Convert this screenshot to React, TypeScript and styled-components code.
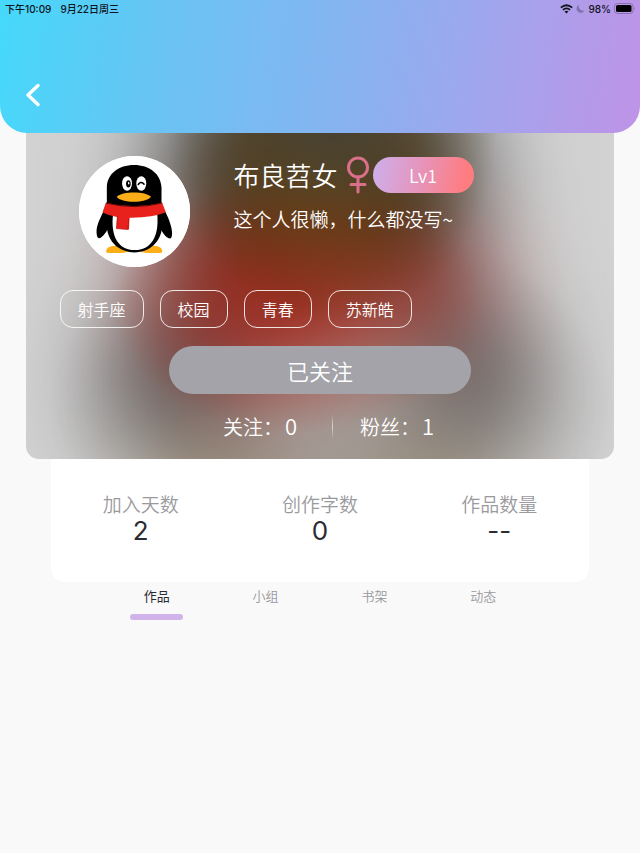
import React from "react";
import styled, { createGlobalStyle } from "styled-components";

const GlobalStyle = createGlobalStyle`
  *, *::before, *::after { box-sizing: border-box; }
  body {
    margin: 0;
    background: #f9f9f9;
    font-family: "Noto Sans CJK SC", sans-serif;
    color: #2b2b33;
  }
  button { font: inherit; color: inherit; border: 0; padding: 0; background: none; cursor: pointer; }
`;

const Page = styled.div`
  display: flex;
  flex-direction: column;
`;

const Header = styled.header`
  display: flex;
  flex-direction: column;
  height: 133px;
  border-radius: 0 0 27px 27px;
  background: linear-gradient(99deg, #45d9fb 0%, #68c4f3 25%, #86b3f0 54%, #a3a4ec 77%, #bf93e7 100%);
`;

const StatusBar = styled.div`
  display: flex;
  justify-content: space-between;
  align-items: center;
  height: 17px;
  padding: 0 4px 0 5px;
  font: 500 10px/16px Inter, "Noto Sans CJK SC", sans-serif;
  color: #10141c;
`;

const StatusGroup = styled.div<{ $gap: number }>`
  display: flex;
  align-items: center;
  gap: ${(p) => p.$gap}px;
`;

const BackButton = styled.button`
  display: flex;
  align-items: center;
  justify-content: center;
  width: 32px;
  height: 32px;
  margin: 62px 0 0 17px;
`;

const ProfileCard = styled.section`
  position: relative;
  overflow: hidden;
  display: flex;
  flex-direction: column;
  margin: 0 4%;
  padding: 23px 34px 19px 34px;
  border-radius: 0 0 13px 13px;
  background: #fff;
  color: #fff;
`;

const Backdrop = styled.div`
  position: absolute;
  left: 0;
  top: 50%;
  width: 100%;
  aspect-ratio: 1;
  transform: translateY(-50%);
  filter: blur(54px) saturate(1.1);

  svg { display: block; width: 100%; height: 100%; overflow: visible; }
`;

const Shade = styled.div`
  position: absolute;
  inset: 0;
  background:
    radial-gradient(28% 58% at 52% 0%, rgba(66, 58, 36, 0.6), rgba(80, 58, 20, 0.5) 50%, transparent),
    radial-gradient(32% 40% at 46% 52%, rgba(160, 20, 5, 0.5), rgba(160, 20, 5, 0.25) 50%, transparent),
    radial-gradient(48% 60% at 52% 85%, rgba(100, 85, 78, 0.35), rgba(100, 85, 78, 0.25) 55%, transparent),
    rgba(50, 50, 50, 0.22);
`;

const CardBody = styled.div`
  position: relative;
  display: flex;
  flex-direction: column;
`;

const Identity = styled.div`
  display: flex;
  gap: 44px;
  padding-left: 19px;
`;

const Avatar = styled.div`
  flex: none;
  width: 111px;
  height: 111px;
  border-radius: 50%;
  overflow: hidden;
  background: #fff;

  svg { display: block; width: 100%; height: 100%; }
`;

const Intro = styled.div`
  display: flex;
  flex-direction: column;
  gap: 12px;
`;

const NameRow = styled.div`
  display: flex;
  align-items: center;
  height: 38px;
`;

const Name = styled.h1`
  margin: 0 8px 0 0;
  font: 350 26px/36px "Noto Sans CJK SC", sans-serif;
`;

const Level = styled.span`
  width: 101px;
  margin-left: 3px;
  border-radius: 18px;
  background: linear-gradient(100deg, #cdb0ec 0%, #e595bd 45%, #ff7c80 90%);
  font-size: 18px;
  font-weight: 350;
  line-height: 36px;
  text-align: center;
`;

const Bio = styled.p`
  margin: 0;
  font: 350 19px/26px "Noto Sans CJK SC", sans-serif;
`;

const Tags = styled.ul`
  display: flex;
  flex-wrap: wrap;
  gap: 16px;
  margin: 23px 0 0;
  padding: 0;
  list-style: none;
`;

const Tag = styled.li`
  padding: 0 17px;
  border: 1px solid rgba(255, 255, 255, 0.85);
  border-radius: 13px;
  font: 350 16px/36px "Noto Sans CJK SC", sans-serif;
`;

const FollowButton = styled.button`
  align-self: center;
  width: 58%;
  height: 48px;
  margin-top: 18px;
  border-radius: 24px;
  && { background: #a3a3a9; }
  font: 350 22px/46px "Noto Sans CJK SC", sans-serif;
`;

const Counts = styled.div`
  display: flex;
  align-items: center;
  align-self: center;
  gap: 27px;
  margin-top: 18px;
  padding-left: 25px;
`;

const Count = styled.span`
  display: flex;
  align-items: baseline;
  gap: 2px;
  min-width: 82px;
  font: 350 20px/26px "Noto Sans CJK SC", sans-serif;
`;

const CountNumber = styled.span`
  font-size: 22px;
`;

const Divider = styled.i`
  width: 1px;
  height: 25px;
  background: linear-gradient(transparent, rgba(255, 255, 255, 0.6), transparent);
`;

const Stats = styled.dl`
  display: grid;
  grid-template-columns: repeat(3, 1fr);
  margin: 0 8%;
  padding: 32px 0 37px;
  border-radius: 0 0 14px 14px;
  background: #fff;
  text-align: center;
`;

const StatLabel = styled.dt`
  font: 350 19px/26px "Noto Sans CJK SC", sans-serif;
  color: #9a9a9e;
`;

const StatValue = styled.dd`
  margin: 0;
  font: 400 26px/28px Inter, sans-serif;
  color: #2b2b33;
`;

const Tabs = styled.nav`
  display: grid;
  grid-template-columns: repeat(4, 1fr);
  margin: 2px 16% 0;
`;

const Tab = styled.button<{ $active?: boolean }>`
  display: flex;
  flex-direction: column;
  align-items: center;
  gap: 6px;
  && { color: ${(p) => (p.$active ? "#2b2b33" : "#98989c")}; }
  font: ${(p) => (p.$active ? 400 : 350)} 13px/24px "Noto Sans CJK SC", sans-serif;

  &::after {
    content: "";
    width: 53px;
    height: 6px;
    border-radius: 3px;
    background: ${(p) => (p.$active ? "#d0b3ea" : "transparent")};
  }
`;

const Penguin = () => (
  <svg viewBox="25 18 335 335" aria-hidden="true">
    <rect x="25" y="18" width="335" height="335" fill="#fff" />
    <path d="M107 306Q105 291 136 289L180 302Q170 311 150 311H113Q107 311 107 306Z" fill="#fbae17" />
    <path d="M276 306Q278 291 250 289L204 302Q214 311 234 311H270Q276 311 276 306Z" fill="#fbae17" />
    <path d="M98 187C88 208 77 228 78 250Q79 267 86 266C97 264 109 246 118 226L130 187Z" fill="#000" />
    <path d="M286 187C296 208 306 232 306 252Q305 268 299 267C286 265 275 246 265 226L254 187Z" fill="#000" />
    <path d="M109 170V112C110 72 144 45 191 45S272 72 274 112V170C277 195 277 217 276 231C273 277 238 309 193 309S112 279 109 231C108 214 107 190 109 170Z" fill="#000" />
    <path d="M128 192H261C268 262 241 302 193 302S119 262 128 192Z" fill="#fff" />
    <path d="M106 159Q190 180 276 159L287 188Q245 205 177 204L176 240L138 237L140 202Q113 198 96 188Z" fill="#e8211d" />
    <path d="M141 199L138 237L172 240L176 205" fill="none" stroke="#a8100e" strokeWidth="2" />
    <path d="M106 160Q190 181 276 160" fill="none" stroke="#5d0906" strokeWidth="3" />
    <ellipse cx="170" cy="101" rx="15" ry="22" fill="#fff" />
    <ellipse cx="213" cy="101" rx="15" ry="22" fill="#fff" />
    <ellipse cx="174" cy="102" rx="7" ry="11" fill="#000" />
    <ellipse cx="175" cy="100" rx="2" ry="4" fill="#fff" />
    <path d="M204 104Q207 97 213 98Q219 99 221 103" fill="none" stroke="#000" strokeWidth="5" strokeLinecap="round" />
    <path d="M139 141C154 124 227 124 242 141C230 161 151 161 139 141Z" fill="#fbae17" />
  </svg>
);

const tags = ["射手座", "校园", "青春", "苏新皓"];
const stats = [
  ["加入天数", "2"],
  ["创作字数", "0"],
  ["作品数量", "--"],
];
const tabs = ["作品", "小组", "书架", "动态"];

export default function App() {
  return (
    <Page>
      <GlobalStyle />
      <Header>
        <StatusBar>
          <StatusGroup $gap={9}>
            <span>下午10:09</span>
            <span>9月22日周三</span>
          </StatusGroup>
          <StatusGroup $gap={3}>
            <svg width="13" height="10" viewBox="0 0 13 10" fill="none" stroke="#10141c" strokeWidth="1.7">
              <path d="M.8 3.7Q6.500-1.200 12.200 3.700M2.900 5.900Q6.500 2.900 10.100 5.900" />
              <path d="M4.500 7.500Q6.500 6 8.500 7.500L6.500 9.600Z" fill="#10141c" stroke="none" />
            </svg>
            <svg width="9" height="10" viewBox="0 0 9 10">
              <path d="M3 .8A4.200 4.200 0 1 0 8.500 6.500A4.400 4.400 0 0 1 3 .8Z" fill="#8371af" />
            </svg>
            <span>98%</span>
            <svg width="22" height="11" viewBox="0 0 22 11">
              <rect x=".5" y=".5" width="18.500" height="10" rx="2.800" fill="none" stroke="#8b70b0" />
              <rect x="2" y="2" width="15.500" height="7" rx="1.500" fill="#000" />
              <path d="M20 3.700Q21.500 5.500 20 7.300Z" fill="#8b70b0" />
            </svg>
          </StatusGroup>
        </StatusBar>
        <BackButton aria-label="返回">
          <svg width="16" height="24" viewBox="0 0 16 24" fill="none" stroke="#fff" strokeWidth="3.400" strokeLinecap="round" strokeLinejoin="round">
            <path d="M13 2.500L3 12L13 21.500" />
          </svg>
        </BackButton>
      </Header>

      <ProfileCard>
        <Backdrop>
          <Penguin />
        </Backdrop>
        <Shade />
        <CardBody>
          <Identity>
            <Avatar>
              <Penguin />
            </Avatar>
            <Intro>
              <NameRow>
                <Name>布良苕女</Name>
                <svg width="24" height="38" viewBox="0 0 24 38" fill="none" stroke="#d9708a" strokeWidth="3" strokeLinecap="round" role="img" aria-label="女">
                  <circle cx="12" cy="11.500" r="9.500" />
                  <path d="M12 21V36M5 28.500H19" />
                </svg>
                <Level>Lv1</Level>
              </NameRow>
              <Bio>这个人很懒，什么都没写~</Bio>
            </Intro>
          </Identity>
          <Tags>
            {tags.map((t) => (
              <Tag key={t}>{t}</Tag>
            ))}
          </Tags>
          <FollowButton>已关注</FollowButton>
          <Counts>
            <Count>关注：<CountNumber>0</CountNumber></Count>
            <Divider />
            <Count>粉丝：<CountNumber>1</CountNumber></Count>
          </Counts>
        </CardBody>
      </ProfileCard>

      <Stats>
        {stats.map(([label, value]) => (
          <div key={label}>
            <StatLabel>{label}</StatLabel>
            <StatValue>{value}</StatValue>
          </div>
        ))}
      </Stats>

      <Tabs>
        {tabs.map((t, i) => (
          <Tab key={t} $active={i === 0} aria-current={i === 0 ? "page" : undefined}>
            {t}
          </Tab>
        ))}
      </Tabs>
    </Page>
  );
}
